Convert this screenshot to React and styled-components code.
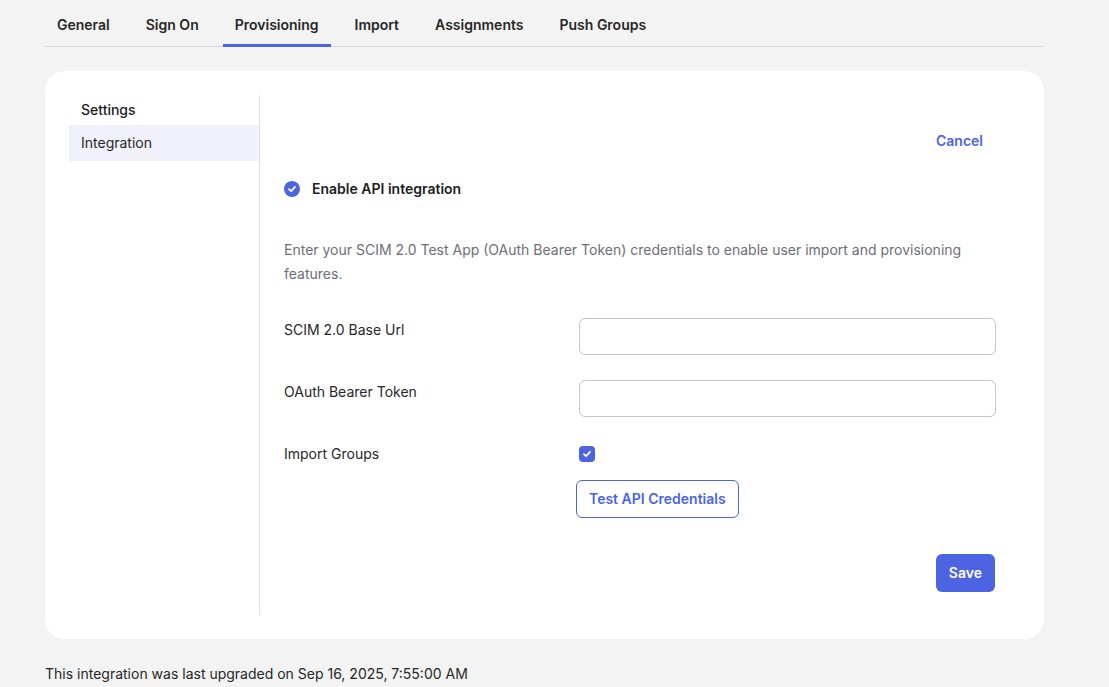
import React from 'react';
import styled, { createGlobalStyle } from 'styled-components';

const GlobalStyle = createGlobalStyle`
  body {
    margin: 0;
    background: #f3f3f3;
    font-family: Inter, "Noto Sans", sans-serif;
    color: #1d1d21;
  }
`

const Page = styled.div`
  width: 999px;
  padding: 0 0 0 45px;
`
const Tabs = styled.nav`
  display: flex;
  gap: 12px;
  border-bottom: 1px solid #d7d7dc;
  padding-top: 10px;
`
const Tab = styled.div`
  padding: 5px 12px 9px;
  font-size: 14px;
  font-weight: 600;
  line-height: 20px;
  color: #272727;
  border-bottom: 3px solid ${p => (p.$active ? '#4c64e1' : 'transparent')};
  margin-bottom: -1px;
`
const Card = styled.section`
  margin-top: 24px;
  background: #fff;
  border-radius: 20px;
  padding: 24px 48px 24px 24px;
  display: flex;
`
const SideNav = styled.aside`
  flex: 0 0 191px;
  box-sizing: border-box;
  border-right: 1px solid #e1e1e6;
  min-height: 520px;
`
const NavTitle = styled.div`
  font-size: 14px;
  font-weight: 500;
  line-height: 20px;
  padding: 5px 12px 5px;
  color: #1d1d21;
`
const NavItem = styled.div`
  font-size: 14px;
  line-height: 20px;
  padding: 8px 12px;
  background: ${p => (p.$active ? '#f1f1fc' : 'transparent')};
  color: #272727;
`
const Content = styled.div`
  flex: 1;
  padding-left: 24px;
  display: flex;
  flex-direction: column;
`
const TopBar = styled.div`
  display: flex;
  justify-content: flex-end;
  padding: 36px 13px 0 0;
`
const LinkButton = styled.button`
  border: 0;
  background: none;
  font: 600 14px/20px Inter, sans-serif;
  color: #4c64e1;
  padding: 0;
`
const CheckRow = styled.label`
  display: flex;
  align-items: center;
  gap: 12px;
  margin-top: 28px;
  font-size: 14px;
  font-weight: 600;
  line-height: 20px;
`
const Box = styled.span`
  width: 16px;
  height: 16px;
  border-radius: ${p => (p.$round ? '50%' : '4px')};
  background: #4c64e1;
  display: inline-flex;
  align-items: center;
  justify-content: center;
  flex-shrink: 0;
`
const Description = styled.p`
  margin: 39px 0 0;
  font-size: 14px;
  line-height: 24px;
  color: #6e6e78;
  max-width: 700px;
`
const Field = styled.div`
  display: grid;
  grid-template-columns: 295px 1fr;
  align-items: ${p => (p.$center ? 'center' : 'start')};
  margin-top: ${p => p.$gap || 25}px;
`
const Label = styled.div`
  font-size: 14px;
  line-height: 20px;
  color: #272727;
  padding-top: ${p => (p.$center ? 0 : 2)}px;
`
const Input = styled.input`
  height: 37px;
  box-sizing: border-box;
  border: 1px solid #c5c5cc;
  border-radius: 6px;
  width: 417px;
  font: 14px Inter, sans-serif;
`
const OutlineButton = styled.button`
  margin: 16px 0 0 292px;
  align-self: flex-start;
  height: 38px;
  padding: 0 12px;
  border: 1px solid #4c64e1;
  border-radius: 6px;
  background: #fff;
  font: 600 14px/20px Inter, sans-serif;
  color: #4c64e1;
`
const PrimaryButton = styled.button`
  margin-top: 36px;
  margin-right: 1px;
  align-self: flex-end;
  height: 38px;
  padding: 0 13px;
  border: 0;
  border-radius: 6px;
  background: #4c64e1;
  font: 600 14px/20px Inter, sans-serif;
  color: #fff;
`
const Footer = styled.p`
  margin: 25px 0 0;
  font-size: 14px;
  line-height: 20px;
  color: #272727;
`

const Check = () => (
  <svg width="10" height="10" viewBox="0 0 10 10">
    <path d="M2 5.2 L4.1 7.2 L8 2.9" fill="none" stroke="#fff" strokeWidth="1.8" strokeLinecap="round" strokeLinejoin="round" />
  </svg>
)

const tabs = ['General', 'Sign On', 'Provisioning', 'Import', 'Assignments', 'Push Groups']

export default function App() {
  return (
    <Page>
      <GlobalStyle />
      <Tabs>
        {tabs.map(t => (
          <Tab key={t} $active={t === 'Provisioning'}>{t}</Tab>
        ))}
      </Tabs>
      <Card>
        <SideNav>
          <NavTitle>Settings</NavTitle>
          <NavItem $active>Integration</NavItem>
        </SideNav>
        <Content>
          <TopBar>
            <LinkButton>Cancel</LinkButton>
          </TopBar>
          <CheckRow>
            <Box $round><Check /></Box>
            Enable API integration
          </CheckRow>
          <Description>
            Enter your SCIM 2.0 Test App (OAuth Bearer Token) credentials to enable user import and provisioning features.
          </Description>
          <Field $gap={32}>
            <Label>SCIM 2.0 Base Url</Label>
            <Input />
          </Field>
          <Field>
            <Label>OAuth Bearer Token</Label>
            <Input />
          </Field>
          <Field $gap={27} $center>
            <Label $center>Import Groups</Label>
            <Box><Check /></Box>
          </Field>
          <OutlineButton>Test API Credentials</OutlineButton>
          <PrimaryButton>Save</PrimaryButton>
        </Content>
      </Card>
      <Footer>This integration was last upgraded on Sep 16, 2025, 7:55:00 AM</Footer>
    </Page>
  )
}
